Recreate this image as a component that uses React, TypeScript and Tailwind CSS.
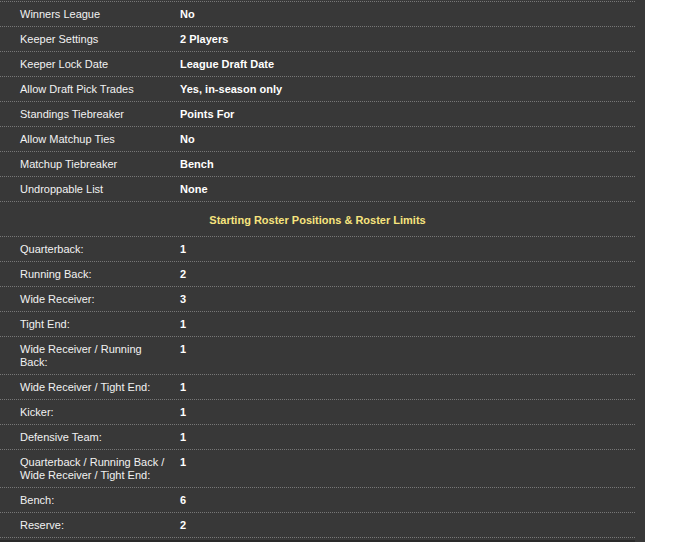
import React from "react";

type Row = [string, string];

const top: Row[] = [
  ["Winners League", "No"],
  ["Keeper Settings", "2 Players"],
  ["Keeper Lock Date", "League Draft Date"],
  ["Allow Draft Pick Trades", "Yes, in-season only"],
  ["Standings Tiebreaker", "Points For"],
  ["Allow Matchup Ties", "No"],
  ["Matchup Tiebreaker", "Bench"],
  ["Undroppable List", "None"],
];

const roster: Row[] = [
  ["Quarterback:", "1"],
  ["Running Back:", "2"],
  ["Wide Receiver:", "3"],
  ["Tight End:", "1"],
  ["Wide Receiver / Running Back:", "1"],
  ["Wide Receiver / Tight End:", "1"],
  ["Kicker:", "1"],
  ["Defensive Team:", "1"],
  ["Quarterback / Running Back / Wide Receiver / Tight End:", "1"],
  ["Bench:", "6"],
  ["Reserve:", "2"],
];

function R({ label, value }: { label: string; value: string }) {
  return (
    <div className="flex border-b border-dotted border-[#777777]">
      <div className="w-[180px] shrink-0 pl-[20px] pr-[10px] pt-[6px] pb-[5px] text-[#f2f2f2]">
        {label}
      </div>
      <div className="pt-[6px] pb-[5px] font-bold text-white">{value}</div>
    </div>
  );
}

export default function App() {
  return (
    <div className="flex min-h-[542px] w-[674px] bg-white">
      <div
        className="w-[645px] bg-[#383838] text-[11px] leading-[13px]"
        style={{ fontFamily: '"Liberation Sans", Arial, sans-serif' }}
      >
        <div className="w-[635px]">
          <div className="h-px" />
          <div className="border-b border-dotted border-[#777777]" />
          {top.map(([l, v]) => (
            <R key={l} label={l} value={v} />
          ))}
          <div className="border-b border-dotted border-[#777777] pt-[12px] pb-[9px] text-center font-bold text-[#f7e47e]">
            Starting Roster Positions &amp; Roster Limits
          </div>
          {roster.map(([l, v]) => (
            <R key={l} label={l} value={v} />
          ))}
          <div className="mt-[2px] h-[2px] bg-[#2a2a2a]" />
        </div>
      </div>
    </div>
  );
}
